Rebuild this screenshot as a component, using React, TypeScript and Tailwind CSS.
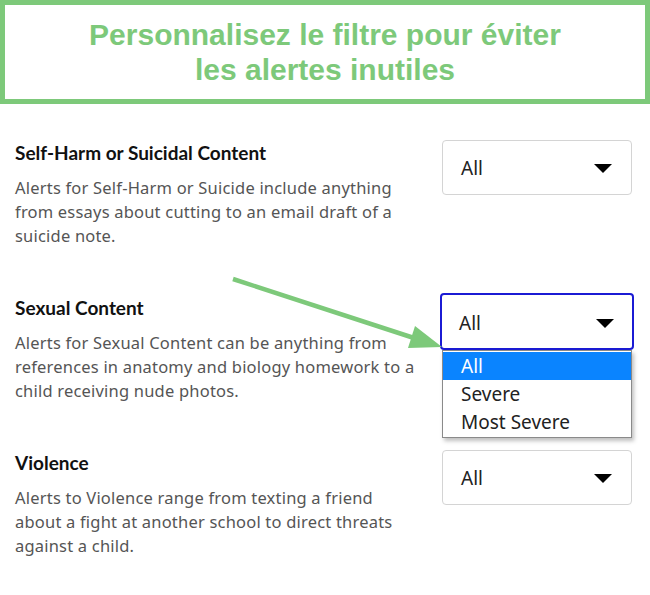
import { ReactNode } from 'react';

type Filter = {
  title: string;
  lines: string[];
  open?: boolean;
};

const filters: Filter[] = [
  {
    title: 'Self-Harm or Suicidal Content',
    lines: [
      'Alerts for Self-Harm or Suicide include anything',
      'from essays about cutting to an email draft of a',
      'suicide note.',
    ],
  },
  {
    title: 'Sexual Content',
    lines: [
      'Alerts for Sexual Content can be anything from',
      'references in anatomy and biology homework to a',
      'child receiving nude photos.',
    ],
    open: true,
  },
  {
    title: 'Violence',
    lines: [
      'Alerts to Violence range from texting a friend',
      'about a fight at another school to direct threats',
      'against a child.',
    ],
  },
];

const options = ['All', 'Severe', 'Most Severe'];

function Caret() {
  return (
    <svg width="18" height="9" viewBox="0 0 18 9" className="shrink-0">
      <path d="M0 0 H18 L9 9 Z" fill="#000" />
    </svg>
  );
}

function Select({ open }: { open?: boolean }): ReactNode {
  return (
    <div className="relative w-[190px] shrink-0">
      <div
        className={
          open
            ? 'flex h-[57px] -mt-[2px] -mx-[2px] items-center justify-between rounded-[4px] border-2 border-[#1b1bd4] pl-[17px] pr-[18px] pt-[3px]'
            : 'flex h-[55px] items-center justify-between rounded-[4px] border border-[#d4d4d4] pl-[18px] pr-[19px] pt-[2px]'
        }
      >
        <span className="text-[19px] text-[#222]">All</span>
        <Caret />
      </div>
      {open && (
        <ul className="absolute left-0 right-0 top-[55px] z-10 border border-[#8a8a8a] bg-white py-px shadow-[2px_3px_4px_rgba(0,0,0,0.25)]">
          {options.map((o, i) => (
            <li
              key={o}
              className={
                i === 0
                  ? 'h-[28px] bg-[#0a84ff] pl-[18px] text-[19px] leading-[28px] text-white'
                  : 'h-[28px] pl-[18px] text-[19px] leading-[28px] text-[#222]'
              }
            >
              {o}
            </li>
          ))}
        </ul>
      )}
    </div>
  );
}

export default function App() {
  return (
    <div className="relative h-[595px] w-[650px] overflow-hidden bg-white font-['Noto_Sans',sans-serif]">
      <header className="flex h-[104px] flex-col items-center justify-center border-[5px] border-[#7dc97a] font-['Liberation_Sans',Arial,sans-serif] text-[30px] font-bold leading-[35px] text-[#7dc97a]">
        <span>Personnalisez le filtre pour éviter</span>
        <span>les alertes inutiles</span>
      </header>

      <div className="flex flex-col pt-[36px]">
        {filters.map((f) => (
          <section key={f.title} className="flex h-[155px] items-start justify-between pl-[15px] pr-[18px]">
            <div className="pt-[1px]">
              <h3 className="font-['Lato',sans-serif] text-[19px] font-bold leading-[24px] text-[#111]">
                {f.title}
              </h3>
              <p className="mt-[11px] text-[16.5px] leading-[24px] tracking-[0.2px] text-[#555]">
                {f.lines.map((l) => (
                  <span key={l} className="block whitespace-nowrap">
                    {l}
                  </span>
                ))}
              </p>
            </div>
            <Select open={f.open} />
          </section>
        ))}
      </div>

      <svg className="pointer-events-none absolute left-0 top-0" width="650" height="595">
        <line x1="233" y1="279" x2="414" y2="338" stroke="#7dc97a" strokeWidth="4.5" />
        <polygon points="442,347 408,348 415,326" fill="#7dc97a" />
      </svg>
    </div>
  );
}
